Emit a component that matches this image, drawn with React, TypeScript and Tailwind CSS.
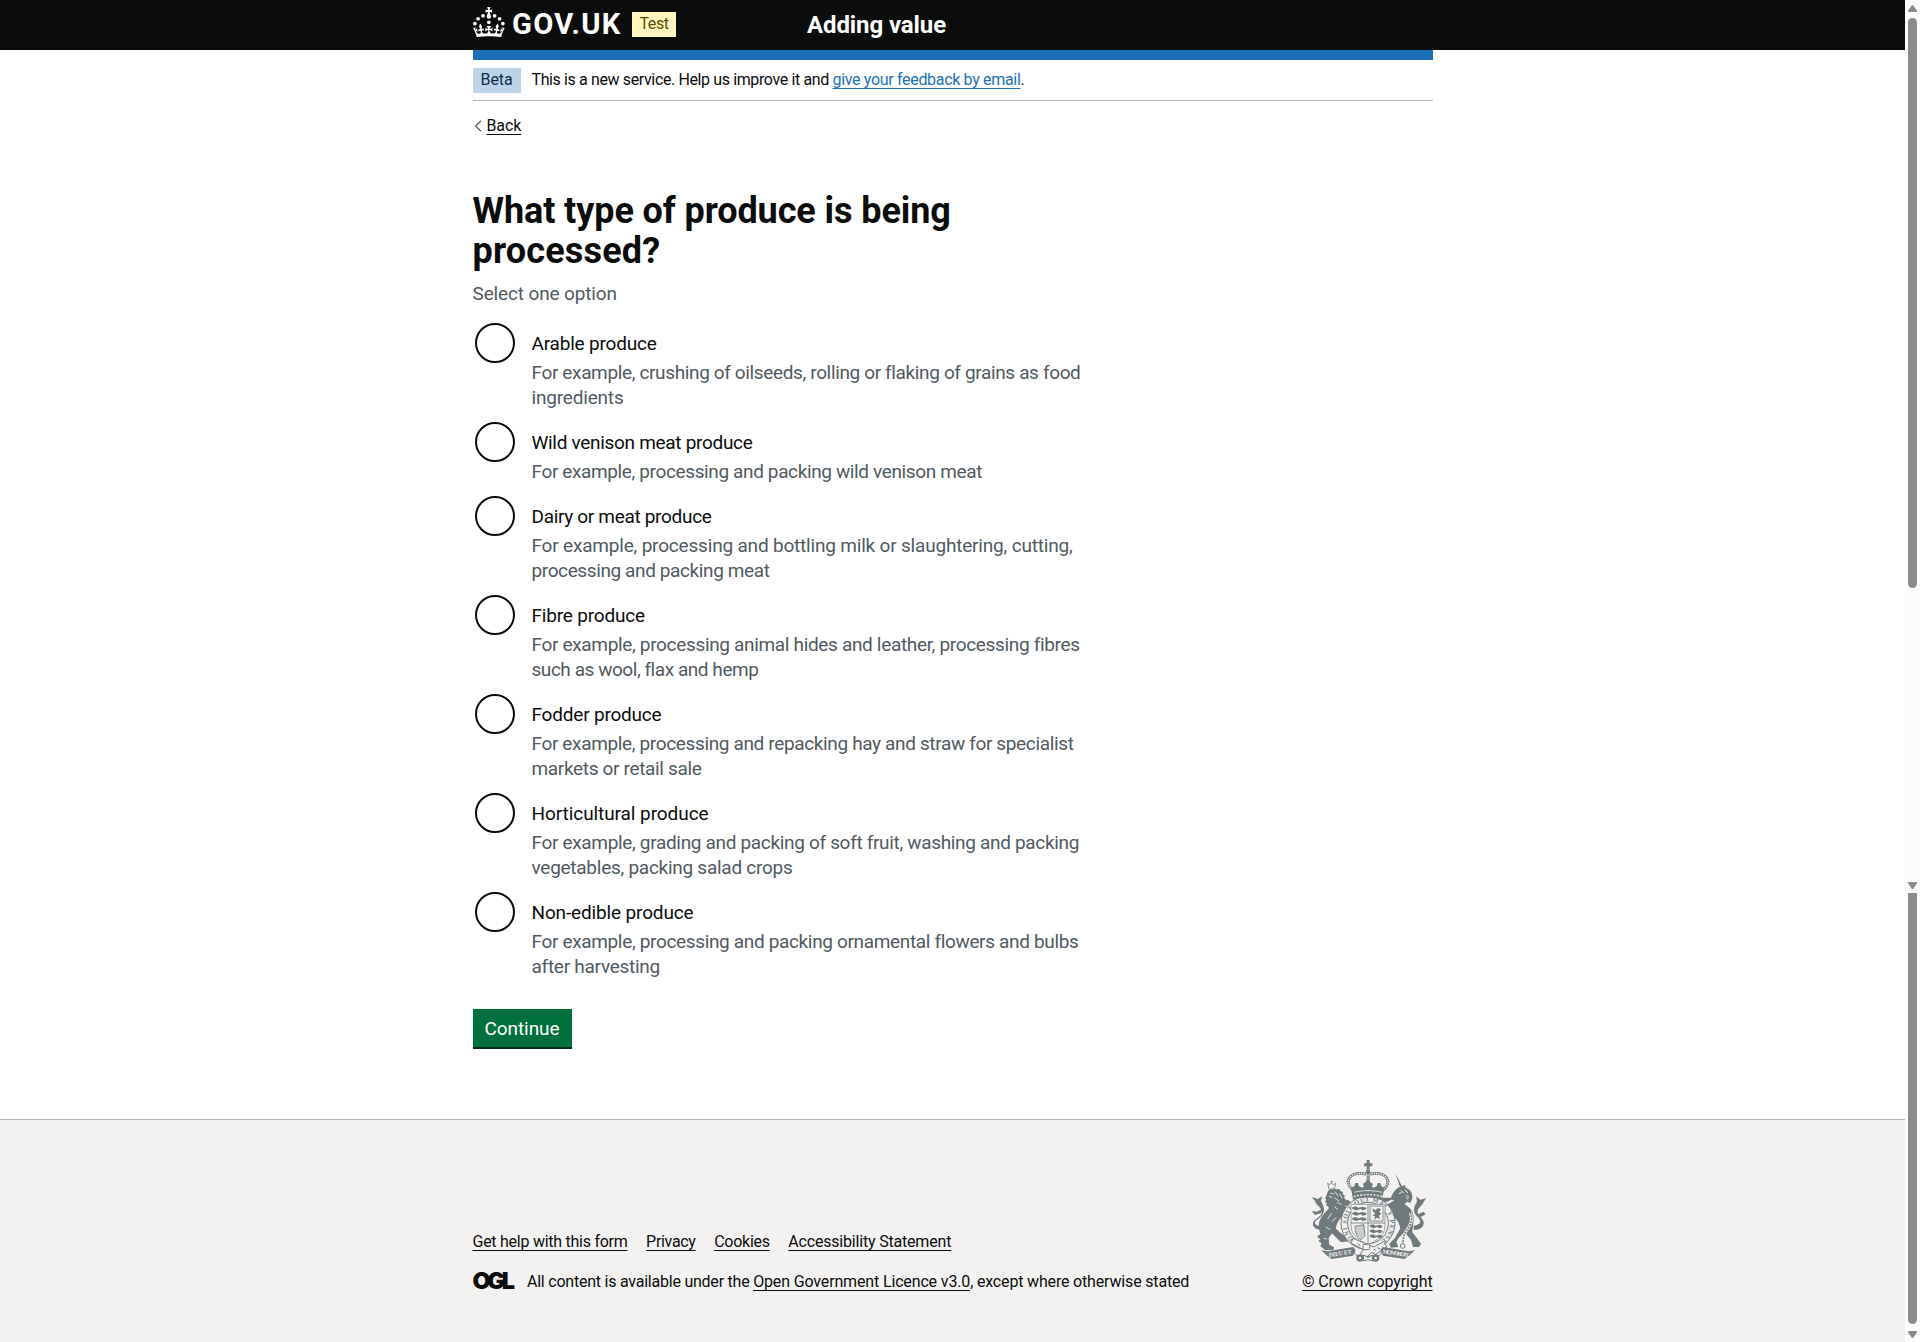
type Line = [text: string, tracking: string];

const options: { label: Line; hints: Line[] }[] = [
  {
    label: ["Arable produce", "tracking-[-0.2px]"],
    hints: [
      ["For example, crushing of oilseeds, rolling or flaking of grains as food", "tracking-[-0.361px]"],
      ["ingredients", "tracking-[-0.186px]"],
    ],
  },
  {
    label: ["Wild venison meat produce", "tracking-[-0.304px]"],
    hints: [["For example, processing and packing wild venison meat", "tracking-[-0.371px]"]],
  },
  {
    label: ["Dairy or meat produce", "tracking-[-0.318px]"],
    hints: [
      ["For example, processing and bottling milk or slaughtering, cutting,", "tracking-[-0.19px]"],
      ["processing and packing meat", "tracking-[-0.389px]"],
    ],
  },
  {
    label: ["Fibre produce", "tracking-[-0.178px]"],
    hints: [
      ["For example, processing animal hides and leather, processing fibres", "tracking-[-0.331px]"],
      ["such as wool, flax and hemp", "tracking-[-0.451px]"],
    ],
  },
  {
    label: ["Fodder produce", "tracking-[-0.198px]"],
    hints: [
      ["For example, processing and repacking hay and straw for specialist", "tracking-[-0.356px]"],
      ["markets or retail sale", "tracking-[-0.334px]"],
    ],
  },
  {
    label: ["Horticultural produce", "tracking-[-0.074px]"],
    hints: [
      ["For example, grading and packing of soft fruit, washing and packing", "tracking-[-0.326px]"],
      ["vegetables, packing salad crops", "tracking-[-0.264px]"],
    ],
  },
  {
    label: ["Non-edible produce", "tracking-[-0.144px]"],
    hints: [
      ["For example, processing and packing ornamental flowers and bulbs", "tracking-[-0.343px]"],
      ["after harvesting", "tracking-[-0.266px]"],
    ],
  },
];

const footerLinks: Line[] = [
  ["Get help with this form", "tracking-[-0.259px]"],
  ["Privacy", "tracking-[-0.313px]"],
  ["Cookies", "tracking-[-0.272px]"],
  ["Accessibility Statement", "tracking-[-0.19px]"],
];

const linkClass = "underline decoration-1 underline-offset-[3px] [text-decoration-skip-ink:none]";

function Crown() {
  return (
    <svg viewBox="0 0 64 60" className="h-[30px] w-8 shrink-0 fill-white" aria-hidden="true">
      <circle cx="20" cy="17.6" r="3.7" />
      <circle cx="10.2" cy="23.5" r="3.7" />
      <circle cx="3.7" cy="33.2" r="3.7" />
      <circle cx="31.7" cy="30.6" r="3.7" />
      <circle cx="43.3" cy="17.6" r="3.7" />
      <circle cx="53.2" cy="23.5" r="3.7" />
      <circle cx="59.7" cy="33.2" r="3.7" />
      <path d="M33.1,9.8c.2-.1.3-.3.5-.5l4.6,2.4v-6.8l-4.6,1.5c-.1-.2-.3-.3-.5-.5l1.9-5.9h-6.7l1.9,5.9c-.2.1-.3.3-.5.5l-4.6-1.5v6.8l4.6-2.4c.1.2.3.3.5.5l-2.6,8c-.9,2.8,1.2,5.7,4.1,5.7h0c3,0,5.1-2.9,4.1-5.7l-2.6-8ZM37,37.9s-3.4,3.8-4.1,6.1c2.2,0,4.2-.5,6.4-2.8l-.7,8.5c-2-2.8-4.4-4.1-5.7-3.8.1,3.1.5,6.7,5.8,7.2,3.7.3,6.7-1.5,7-3.8.4-2.6-2-4.3-3.7-1.6-1.4-4.5,2.4-6.1,4.9-3.2-1.9-4.5-1.8-7.7,2.4-10.9,3,4,2.6,7.3-1.2,11.1,2.4-1.3,6.2,0,4,4.6-1.2-2.8-3.7-2.2-4.2.2-.3,1.7.7,3.7,3,4.2,1.9.3,4.7-.9,7-5.9-1.3,0-2.4.7-3.9,1.7l2.4-8c.6,2.3,1.4,3.7,2.2,4.5.6-1.6.5-2.8,0-5.3l5,1.8c-2.6,3.6-5.2,8.7-7.3,17.5-7.4-1.1-15.7-1.7-24.5-1.7h0c-8.8,0-17.1.6-24.5,1.7-2.1-8.9-4.7-13.9-7.3-17.5l5-1.8c-.5,2.5-.6,3.7,0,5.3.8-.8,1.6-2.3,2.2-4.5l2.4,8c-1.5-1-2.6-1.7-3.9-1.7,2.3,5,5.2,6.2,7,5.9,2.3-.4,3.3-2.4,3-4.2-.5-2.4-3-3.1-4.2-.2-2.2-4.6,1.6-6,4-4.6-3.7-3.7-4.2-7.1-1.2-11.1,4.2,3.2,4.3,6.4,2.4,10.9,2.5-2.8,6.3-1.3,4.9,3.2-1.8-2.7-4.1-1-3.7,1.6.3,2.3,3.3,4.1,7,3.8,5.4-.5,5.7-4.2,5.8-7.2-1.3-.2-3.7,1-5.7,3.8l-.7-8.5c2.2,2.3,4.2,2.7,6.4,2.8-.7-2.3-4.1-6.1-4.1-6.1h10.6,0Z" />
    </svg>
  );
}

/* Royal arms: crown, garter and shield, lion and unicorn, motto scroll */
function RoyalArms() {
  const ink = "#6f7a7c";
  const paper = "#f3f2f1";
  return (
    <svg viewBox="13 0 378 330" className="h-[110px] w-[126px]" fill={ink} stroke="none" aria-hidden="true">
      {/* lion */}
      <path d="M84 84l5 5 6-5 6 5 7-4-4 17H88z" fill={paper} stroke={ink} strokeWidth="2.5" />
      <circle cx="96" cy="80" r="3" />
      <path d="M86 106l8-3 10-2 8 2 8-1 2 6 8 3-1 6 7 5-3 6 6 6-4 6 5 7-5 4 6 10-4 16-14 12c-10 12-14 22-14 32l20 18 24 8 2 12-32 2-26-26-10 14 2 20 14 8-2 8H76l-14-12 4-8-10-6 6-6-10-8 10-8-4-16c-4-18 6-36 20-50l10-12-4-6-6-2 4-6-6-4 4-8-4-2z" />
      <path d="M118 152l22 4 14 14 12 16-8 8-12-4-14-14-20-8zM116 140l28-6 16 12 8 16-10 2-16-12-26 0z" />
      <path d="M64 224c-18 0-26-10-24-20 4-16 26-16 26-34 0-14-16-18-20-32l-10-12 18 6 14-8-4 14c8 16 14 28 4 42-8 12-22 14-22 24 2 8 10 8 18 10z" />
      <path d="M46 180l-10-12 16 2 18-10-6 14z" />
      <path
        d="M92 114l12 3M88 124l10 3M106 110l10 14M104 128l14 10M120 116l8 14M112 142l14 6M84 192l12-18M96 200l14-12M78 216l14 8M72 250l10 2M104 154l10 10"
        stroke={paper}
        strokeWidth="2.5"
        fill="none"
      />
      {/* unicorn */}
      <path d="M288 56l20 40-6 4z" />
      <path d="M274 128c6-16 16-30 32-34l10-4 2 8c14 4 22 18 20 32l-6 14-10-4-8 8c16 8 28 22 28 40 0 18-4 32-4 44l14 18 12 16-6 10-18 0-6-22-20-22c-10 10-20 18-24 30l6 14-22 2-6-10 18-20 16-28c-4-18-12-32-28-38l-18 6-8 18-10-4 4-22 16-12-14-6-6 8-8-8 8-12 26-2 20-12-10-2-10 6-14 2c-6-4-4-12-2-14z" />
      <path d="M342 224c18 2 32-8 30-24-4-14-18-16-18-30 0-12 14-18 18-30l8-10-18 4-12-10 2 16c-8 12-12 24-6 36 6 10 16 16 16 24-2 8-10 10-20 12z" />
      <path d="M350 180l22-10 6 8-14 8z" />
      <path d="M304 106l8 8M316 104l8 10M320 120l8 8M298 116l8-4M326 134l-8-8" stroke={paper} strokeWidth="3" fill="none" />
      <path d="M332 172c12 26-4 42-14 58-6 12-8 24-8 36" fill="none" stroke={paper} strokeWidth="9" />
      <path d="M332 172c12 26-4 42-14 58-6 12-8 24-8 36" fill="none" stroke={ink} strokeWidth="5" strokeDasharray="6 3" />
      <circle cx="309" cy="273" r="7" fill={paper} stroke={ink} strokeWidth="3" />
      {/* garter */}
      <ellipse cx="205" cy="204" rx="81" ry="80" fill={paper} stroke={ink} strokeWidth="3" />
      <ellipse cx="205" cy="204" rx="61" ry="62" fill={paper} stroke={ink} strokeWidth="3" />
      <path id="garter" d="M176 262A65 65 0 1 1 238 261" fill="none" />
      <text fontFamily="Liberation Serif, serif" fontSize="19" fontWeight="700" textLength="336">
        <textPath href="#garter">HONI SOIT QUI MAL Y PENSE</textPath>
      </text>
      {/* shield */}
      <path d="M154 148H256V212C256 242 230 258 205 268C180 258 154 242 154 212Z" fill={paper} stroke={ink} strokeWidth="2" />
      <path d="M205 148V268M154 204H256" stroke={ink} strokeWidth="2.5" />
      {[157, 173, 189].map((y) => (
        <path key={y} d={`M158 ${y}l10-3 8 4 12-3 12 3v5l-10 3-8-4-12 4-12-4z`} />
      ))}
      {[211, 226, 241].map((y) => (
        <path key={y} d={`M210 ${y}l10-3 8 4 12-3 8 3v5l-8 3-8-4-10 4-10-4z`} />
      ))}
      <rect x="211" y="153" width="39" height="45" fill="none" stroke={ink} strokeWidth="2.5" />
      <path d="M219 160l8 6 8-7 9 4-5 8 6 6-8 5 5 10-10-4-8 6 2-10-8-2 9-6-8-8z" />
      <path d="M166 214c10-4 18 0 26-6l4 34-12 12c-12-8-18-22-18-40z" fill="none" stroke={ink} strokeWidth="3" />
      <path d="M172 214v24M178 213v32M184 212v38M190 210v34" stroke={ink} strokeWidth="1.8" />
      {/* garter buckle */}
      <path d="M160 250l62 26 30-16 10 16-34 22-12-6-18 18-16-14 10-12-38-20z" fill={paper} stroke={ink} strokeWidth="3" />
      <rect x="190" y="268" width="20" height="16" rx="3" fill={paper} stroke={ink} strokeWidth="3" />
      <path d="M232 278l10 4M174 266l8 6M222 282l8 5" stroke={ink} strokeWidth="3" />
      {/* crown */}
      <path d="M201 44V34h-8v-9h8v-10h9v10h8v9h-8v10z" />
      <circle cx="205" cy="51" r="7" />
      <path d="M162 108C128 78 150 48 200 57M248 108C282 78 260 48 211 57" fill="none" stroke={ink} strokeWidth="9" />
      <path d="M162 108C128 78 150 48 200 57M248 108C282 78 260 48 211 57" fill="none" stroke={paper} strokeWidth="4" strokeDasharray="4 3" />
      <path d="M201 58h9v32h-9z" />
      <path d="M205 60v30" stroke={paper} strokeWidth="3" strokeDasharray="4 3" />
      <path d="M154 98l10-4 3-10h8l3 10 10 4 5-4-4-7 8-5 4-6h7l4 6 8 5-4 7 5 4 10-4 3-10h8l3 10 10 4-9 36c-26-9-60-9-86 0z" />
      <path d="M162 125c27-8 60-8 87 0" fill="none" stroke={paper} strokeWidth="4" strokeDasharray="6 4" />
      <path d="M164 112c25-7 56-7 83 0" fill="none" stroke={paper} strokeWidth="2.5" />
      {/* motto scroll */}
      <path d="M64 286l20 3 76-13 8 10-8 16-64 10-12-8z" />
      <path d="M346 286l-20 3-76-13-8 10 8 16 64 10 12-8z" />
      <path d="M162 278c0 22 10 26 22 26h42c12 0 22-4 22-26" fill="none" stroke={ink} strokeWidth="3" />
      <circle cx="181" cy="309" r="11" />
      <circle cx="228" cy="309" r="11" />
      <circle cx="181" cy="309" r="4" fill={paper} />
      <circle cx="228" cy="309" r="4" fill={paper} />
      <path d="M192 300l13 8 13-8v18l-13-4-13 4z" fill={paper} stroke={ink} strokeWidth="3" />
      <g fill={paper} fontFamily="Liberation Serif, serif" fontSize="18" fontWeight="700">
        <text x="88" y="306" textLength="70" transform="rotate(-8 88 306)">DIEU ET</text>
        <text x="248" y="295" textLength="80" transform="rotate(8 248 295)">MON DROIT</text>
      </g>
    </svg>
  );
}

function Arrow({ up = false }: { up?: boolean }) {
  return (
    <svg viewBox="0 0 9 7" className="h-[7px] w-[9px] shrink-0" fill="#8b8b8b" aria-hidden="true">
      {up ? <path d="M3.6.6a1 1 0 0 1 1.8 0L8.9 5.6Q9.2 7 8 7H1Q-.2 7 .1 5.6Z" /> : <path d="M3.6 6.4a1 1 0 0 0 1.8 0L8.9 1.4Q9.2 0 8 0H1Q-.2 0 .1 1.4Z" />}
    </svg>
  );
}

function Scrollbars() {
  return (
    <div className="flex w-[15px] shrink-0 flex-col items-center bg-[#fcfcfc]" aria-hidden="true">
      <div className="flex h-[893px] w-full flex-col items-center pt-[5px] pb-1">
        <Arrow up />
        <div className="mt-1.5 h-[570px] w-[9px] rounded-full bg-[#8b8b8b]" />
        <div className="grow" />
        <Arrow />
      </div>
      <div className="h-[431px] w-[9px] rounded-b-full bg-[#8b8b8b]" />
      <div className="mt-[7px]">
        <Arrow />
      </div>
    </div>
  );
}

export default function App() {
  return (
    <div className="flex h-[1342px] w-[1920px] overflow-hidden bg-white font-['Roboto',sans-serif] text-base leading-5 whitespace-nowrap text-[#0b0c0c]">
      <div className="flex w-[1905px] shrink-0 flex-col">
        <header className="h-[50px] bg-[#0b0c0c] text-white">
          <div className="mx-auto flex h-[50px] w-[960px] items-start">
            <div className="flex w-[334.5px] items-start">
              <div className="mt-[7px] flex">
                <Crown />
                <span className="ml-[7.5px] w-[119.5px] text-[29.2px] leading-[34px] font-bold tracking-[1.3px]">GOV.UK</span>
              </div>
              <strong className="mt-3 h-[25px] w-[44px] bg-[#fff7bf] pt-0.5 pl-2 font-normal tracking-[-0.4px] text-[#594d00]">
                Test
              </strong>
            </div>
            <span className="mt-2.5 text-2xl leading-[30px] font-bold tracking-[-0.1px]">Adding value</span>
          </div>
        </header>

        <div className="mx-auto w-[960px]">
          <div className="h-2.5 bg-[#1d70b8]" />
          <div className="flex h-[41px] items-start gap-[11px] border-b border-[#b1b4b6] pt-2">
            <strong className="h-[25px] w-12 bg-[#bbd4ea] pt-0.5 pl-2 font-normal tracking-[-0.05px] text-[#0c2d4a]">Beta</strong>
            <span className="mt-0.5">
              <span className="tracking-[-0.376px]">This is a new service. Help us improve it and </span>
              <a href="#" className={`${linkClass} tracking-[-0.323px] text-[#1d70b8]`}>
                give your feedback by email
              </a>
              .
            </span>
          </div>
          <a href="#" className="mt-[15px] flex h-5 w-fit items-center">
            <svg viewBox="0 0 8 12" className="mr-[5px] ml-[1px] h-3 w-2" fill="none" stroke="#505a5f" strokeWidth="1.2" aria-hidden="true">
              <path d="M7 .8L1.5 6L7 11.2" />
            </svg>
            <span className={`${linkClass} tracking-[-0.1px]`}>Back</span>
          </a>

          <main className="mt-[55px]">
            <h1 className="text-4xl leading-10 font-bold">
              <span className="block tracking-[-0.09px]">What type of produce is being</span>
              <span className="block tracking-[0.18px]">processed?</span>
            </h1>
            <p className="mt-2.5 text-[19px] leading-[25px] tracking-[-0.14px] text-[#505a5f]">Select one option</p>
            <div className="mt-[15px] flex flex-col gap-2.5 text-[19px] leading-[25px]">
              {options.map(({ label, hints }) => (
                <div key={label[0]} className="flex">
                  <input
                    type="radio"
                    name="produce"
                    aria-label={label[0]}
                    className="mt-0.5 ml-0.5 size-10 shrink-0 appearance-none rounded-full border-2 border-[#0b0c0c]"
                  />
                  <div className="ml-[17px] pt-2.5">
                    <p className={label[1]}>{label[0]}</p>
                    <div className="mt-1 text-[#505a5f]">
                      {hints.map(([text, tracking]) => (
                        <p key={text} className={tracking}>
                          {text}
                        </p>
                      ))}
                    </div>
                  </div>
                </div>
              ))}
            </div>
            <button className="mt-[30px] block h-[38px] w-[99px] bg-[#00703c] pt-px text-[19px] leading-[25px] tracking-[-0.072px] text-white shadow-[0_2px_0_#002d18]">
              Continue
            </button>
          </main>
        </div>

        <footer className="mt-[72px] grow border-t border-[#b1b4b6] bg-[#f3f2f1] pt-[35px]">
          <div className="mx-auto flex w-[960px] items-end justify-between">
            <div>
              <div className="flex gap-[18.6px]">
                {footerLinks.map(([text, tracking]) => (
                  <a key={text} href="#" className={`${linkClass} ${tracking}`}>
                    {text}
                  </a>
                ))}
              </div>
              <div className="mt-5 flex">
                <span className="w-[54.5px] font-['Inter',sans-serif] text-[23.5px] leading-[17px] font-black tracking-[-3.4px]">OGL</span>
                <span>
                  <span className="tracking-[-0.23px]">All content is available under the </span>
                  <a href="#" className={`${linkClass} tracking-[-0.147px]`}>
                    Open Government Licence v3.0
                  </a>
                  <span className="tracking-[-0.169px]">, except where otherwise stated</span>
                </span>
              </div>
            </div>
            <div className="flex flex-col items-center">
              <RoyalArms />
              <a href="#" className={`${linkClass} mt-[7px] tracking-[-0.117px]`}>
                © Crown copyright
              </a>
            </div>
          </div>
        </footer>
      </div>
      <Scrollbars />
    </div>
  );
}
